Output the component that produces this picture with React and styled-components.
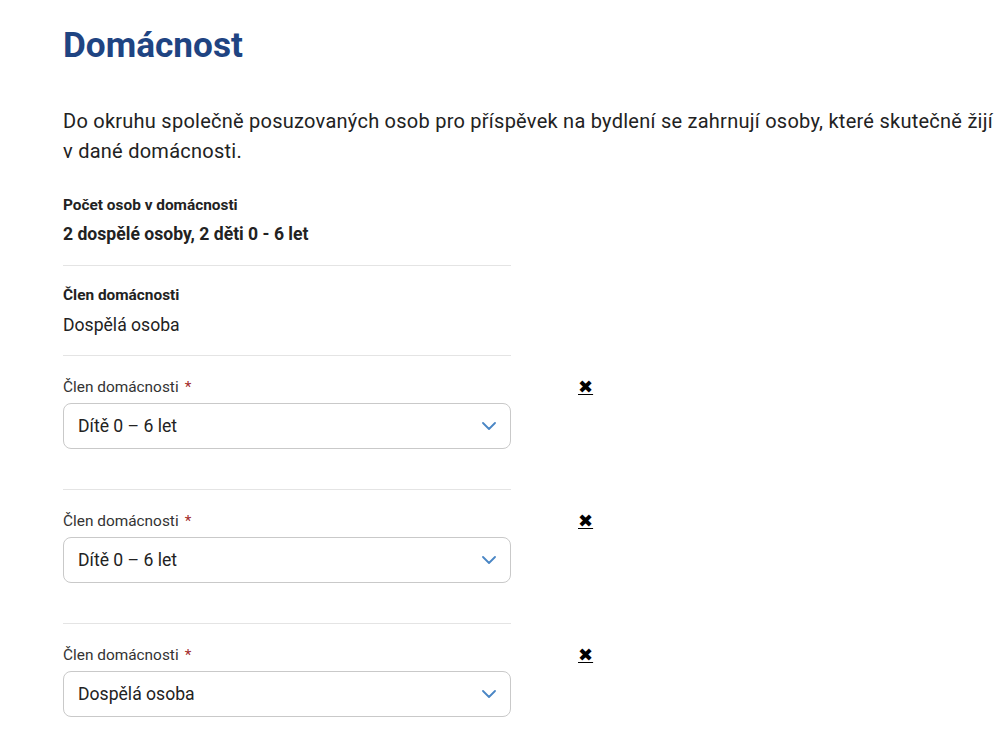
import React from "react";
import styled, { createGlobalStyle } from "styled-components";

const GlobalStyle = createGlobalStyle`
  html, body {
    margin: 0;
    padding: 0;
    background: #ffffff;
    overflow: hidden;
  }
  body {
    font-family: Roboto, "Noto Sans", "Liberation Sans", sans-serif;
    color: #222222;
  }
`;

const Page = styled.main`
  padding: 25px 0 0 63px;
  width: 1100px;
`;

const Heading = styled.h1`
  margin: 0;
  font-size: 35.2px;
  line-height: 40px;
  font-weight: 700;
  color: #1f4482;
`;

const Intro = styled.p`
  margin: 41px 0 0;
  width: 942px;
  font-size: 20px;
  line-height: 30px;
  letter-spacing: 0.25px;
  color: #222222;
`;

const Form = styled.div`
  width: 448px;
  margin-top: 29px;
`;

const Section = styled.section`
  display: flex;
  flex-direction: column;
  gap: ${(p) => p.$gap || 6}px;
  padding: ${(p) => p.$top || 0}px 0 ${(p) => p.$bottom || 18}px;
  border-bottom: 1px solid #e4e4e4;
`;

const InfoLabel = styled.div`
  font-size: 15.4px;
  line-height: 20px;
  font-weight: 700;
  color: #222222;
`;

const InfoValue = styled.div`
  font-size: 17.6px;
  line-height: 26px;
  font-weight: ${(p) => (p.$bold ? 700 : 400)};
  color: #222222;
`;

const MemberRow = styled.div`
  display: flex;
  align-items: flex-start;
  padding: 21px 0 40px;
  border-bottom: ${(p) => (p.$last ? "none" : "1px solid #e4e4e4")};
`;

const Field = styled.div`
  width: 448px;
  flex: none;
  display: flex;
  flex-direction: column;
  gap: 6px;
`;

const FieldLabel = styled.label`
  font-size: 15.4px;
  line-height: 20px;
  color: #333333;
`;

const Required = styled.span`
  color: #a32b2b;
  margin-left: 6px;
`;

const SelectBox = styled.div`
  box-sizing: border-box;
  height: 46px;
  display: flex;
  align-items: center;
  justify-content: space-between;
  padding: 0 14px 0 14px;
  border: 1px solid #c9c9c9;
  border-radius: 8px;
  background: #ffffff;
  font-size: 17.6px;
  color: #222222;
`;

const Chevron = styled.svg`
  width: 14px;
  height: 8px;
  flex: none;
`;

const RemoveLink = styled.a`
  margin-left: 67px;
  font-family: "DejaVu Sans", sans-serif;
  font-size: 18px;
  line-height: 20px;
  color: #000000;
  text-decoration: underline;
  cursor: pointer;
`;

const members = ["Dítě 0 – 6 let", "Dítě 0 – 6 let", "Dospělá osoba"];

export default function App() {
  return (
    <>
      <GlobalStyle />
      <Page>
        <Heading>Domácnost</Heading>
        <Intro>
          Do okruhu společně posuzovaných osob pro příspěvek na bydlení se
          zahrnují osoby, které skutečně žijí v dané domácnosti.
        </Intro>
        <Form>
          <Section $top={0} $bottom={18}>
            <InfoLabel>Počet osob v domácnosti</InfoLabel>
            <InfoValue $bold>2 dospělé osoby, 2 děti 0 - 6 let</InfoValue>
          </Section>
          <Section $top={19} $bottom={17} $gap={7}>
            <InfoLabel>Člen domácnosti</InfoLabel>
            <InfoValue>Dospělá osoba</InfoValue>
          </Section>
          {members.map((m, i) => (
            <MemberRow key={i} $last={i === members.length - 1}>
              <Field>
                <FieldLabel>
                  Člen domácnosti<Required>*</Required>
                </FieldLabel>
                <SelectBox>
                  <span>{m}</span>
                  <Chevron viewBox="0 0 14 8">
                    <path
                      d="M1 1 L7 7 L13 1"
                      fill="none"
                      stroke="#4a86c5"
                      strokeWidth="1.8"
                      strokeLinecap="round"
                      strokeLinejoin="round"
                    />
                  </Chevron>
                </SelectBox>
              </Field>
              <RemoveLink title="Odebrat">✖</RemoveLink>
            </MemberRow>
          ))}
        </Form>
      </Page>
    </>
  );
}
